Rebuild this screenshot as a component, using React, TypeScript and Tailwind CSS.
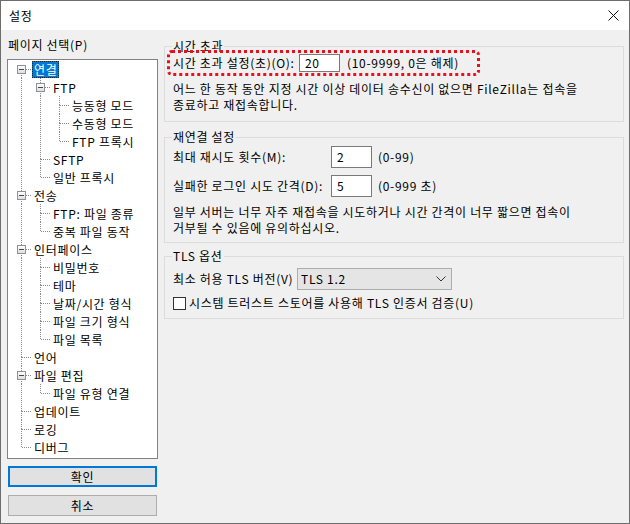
import React from "react";

type Item = { label: string; level: number; selected?: boolean };

const items: Item[] = [
  { label: "연결", level: 0, selected: true },
  { label: "FTP", level: 1 },
  { label: "능동형 모드", level: 2 },
  { label: "수동형 모드", level: 2 },
  { label: "FTP 프록시", level: 2 },
  { label: "SFTP", level: 1 },
  { label: "일반 프록시", level: 1 },
  { label: "전송", level: 0 },
  { label: "FTP: 파일 종류", level: 1 },
  { label: "중복 파일 동작", level: 1 },
  { label: "인터페이스", level: 0 },
  { label: "비밀번호", level: 1 },
  { label: "테마", level: 1 },
  { label: "날짜/시간 형식", level: 1 },
  { label: "파일 크기 형식", level: 1 },
  { label: "파일 목록", level: 1 },
  { label: "언어", level: 0 },
  { label: "파일 편집", level: 0 },
  { label: "파일 유형 연결", level: 1 },
  { label: "업데이트", level: 0 },
  { label: "로깅", level: 0 },
  { label: "디버그", level: 0 },
];

const hasNextSibling = (i: number) => {
  const lvl = items[i].level;
  for (let j = i + 1; j < items.length; j++) {
    if (items[j].level < lvl) return false;
    if (items[j].level === lvl) return true;
  }
  return false;
};

const ancestorAt = (i: number, lvl: number) => {
  for (let j = i; j >= 0; j--) {
    if (items[j].level === lvl) return j;
  }
  return -1;
};

const LINE = "#8a8a8a";

const TreeCell: React.FC<{ mode: "pass" | "empty" | "node"; top?: boolean; bottom?: boolean; expander?: boolean }> = ({ mode, top, bottom, expander }) => {
  return (
    <svg width={19} height={18} className="shrink-0 block">
      {mode === "pass" && <line x1={9.5} y1={0} x2={9.5} y2={18} stroke={LINE} strokeDasharray="1 1" />}
      {mode === "node" && (
        <>
          {top && <line x1={9.5} y1={0} x2={9.5} y2={9} stroke={LINE} strokeDasharray="1 1" />}
          {bottom && <line x1={9.5} y1={9} x2={9.5} y2={18} stroke={LINE} strokeDasharray="1 1" />}
          <line x1={expander ? 14 : 10} y1={9.5} x2={19} y2={9.5} stroke={LINE} strokeDasharray="1 1" />
          {expander && (
            <>
              <defs>
                <linearGradient id="exp" x1="0" y1="0" x2="0" y2="1">
                  <stop offset="0" stopColor="#ffffff" />
                  <stop offset="1" stopColor="#dcdcdc" />
                </linearGradient>
              </defs>
              <rect x={5.5} y={5.5} width={8} height={8} fill="url(#exp)" stroke="#919191" />
              <line x1={7} y1={9.5} x2={12} y2={9.5} stroke="#3b4a5c" />
            </>
          )}
        </>
      )}
    </svg>
  );
};

const TreeRow: React.FC<{ index: number }> = ({ index }) => {
  const item = items[index];
  const cells = [];
  for (let k = 0; k < item.level; k++) {
    const anc = ancestorAt(index, k);
    cells.push(<TreeCell key={k} mode={hasNextSibling(anc) ? "pass" : "empty"} />);
  }
  const expander = index + 1 < items.length && items[index + 1].level > item.level;
  cells.push(
    <TreeCell key="n" mode="node" top={!(index === 0)} bottom={hasNextSibling(index)} expander={expander} />
  );
  return (
    <div className="flex h-[18px]">
      {cells}
      <span
        className={
          "mt-[1px] ml-[1px] h-[17px] px-[2px] flex items-center whitespace-nowrap " +
          (item.selected ? "bg-[#0078d7] text-white outline-1 outline-dotted outline-[#222] -outline-offset-1" : "text-black")
        }
      >
        {item.label}
      </span>
    </div>
  );
};

const Group: React.FC<{ title: string; className?: string; children: React.ReactNode }> = ({ title, className, children }) => (
  <fieldset className={"border border-[#dcdcdc] pl-[8px] pr-[8px] " + (className || "")}>
    <legend className="px-[1px] -ml-[1px] leading-[16px]">{title}</legend>
    {children}
  </fieldset>
);

const Field: React.FC<{ value: string; h: string }> = ({ value, h }) => (
  <div className={"w-[41px] bg-white border border-[#7a7a7a] pl-[5px] flex items-center shrink-0 " + h}>{value}</div>
);

export default function App() {
  return (
    <div className="w-[630px] h-[524px] bg-[#f0f0f0] border border-[#6d6d6d] flex flex-col text-[12px] leading-[16px] tracking-[0.7px] text-black font-['Noto_Sans_CJK_KR','Liberation_Sans',sans-serif] overflow-hidden">
      <div className="h-[29px] bg-white flex items-center justify-between pl-[8px] pr-[10px] shrink-0">
        <span>설정</span>
        <svg width={11} height={11} viewBox="0 0 11 11">
          <path d="M0.5 0.5 L10.5 10.5 M10.5 0.5 L0.5 10.5" stroke="#111" strokeWidth={1} />
        </svg>
      </div>
      <div className="flex flex-1 pl-[6px]">
        <div className="w-[151px] pt-[7px] flex flex-col">
          <div className="h-[16px] pl-[1px]">페이지 선택(P)</div>
          <div className="mt-[6px] h-[400px] bg-white border border-[#828282] pl-[4px] overflow-hidden">
            {items.map((_, i) => (
              <TreeRow key={i} index={i} />
            ))}
          </div>
          <button className="mt-[7px] mx-[1px] h-[21px] bg-[#e1e1e1] border-2 border-[#0078d7] flex items-center justify-center">
            확인
          </button>
          <button className="mt-[8px] mx-[1px] h-[21px] bg-[#e1e1e1] border border-[#adadad] flex items-center justify-center">
            취소
          </button>
        </div>
        <div className="ml-[6px] w-[460px] pt-[8px] flex flex-col">
          <Group title="시간 초과" className="pb-[8px]">
            <div className="relative h-[18px] flex items-center">
              <span className="w-[126px] shrink-0 whitespace-nowrap">시간 초과 설정(초)(O):</span>
              <Field value="20" h="h-[18px]" />
              <span className="ml-[7px] whitespace-nowrap">(10-9999, 0은 해제)</span>
              <span className="absolute left-[-6px] top-[-4px] w-[313px] h-[26px] border-[3px] border-dotted border-[#e8101c] rounded-[5px]" />
            </div>
            <div className="mt-[9px] whitespace-nowrap">
              <div>어느 한 동작 동안 지정 시간 이상 데이터 송수신이 없으면 FileZilla는 접속을</div>
              <div>종료하고 재접속합니다.</div>
            </div>
          </Group>
          <Group title="재연결 설정" className="mt-[7px] pb-[6px]">
            <div className="mt-[1px] h-[22px] flex items-center">
              <span className="w-[158px] shrink-0 whitespace-nowrap">최대 재시도 횟수(M):</span>
              <Field value="2" h="h-[22px]" />
              <span className="ml-[6px]">(0-99)</span>
            </div>
            <div className="mt-[7px] h-[22px] flex items-center">
              <span className="w-[158px] shrink-0 whitespace-nowrap">실패한 로그인 시도 간격(D):</span>
              <Field value="5" h="h-[22px]" />
              <span className="ml-[6px]">(0-999 초)</span>
            </div>
            <div className="mt-[7px] whitespace-nowrap">
              <div>일부 서버는 너무 자주 재접속을 시도하거나 시간 간격이 너무 짧으면 접속이</div>
              <div>거부될 수 있음에 유의하십시오.</div>
            </div>
          </Group>
          <Group title="TLS 옵션" className="mt-[5px] pb-[7px]">
            <div className="mt-[4px] h-[22px] flex items-center">
              <span className="w-[124px] shrink-0 whitespace-nowrap">최소 허용 TLS 버전(V)</span>
              <div className="w-[155px] h-[22px] bg-[#e5e5e5] border border-[#adadad] pl-[3px] pr-[5px] flex items-center justify-between">
                <span>TLS 1.2</span>
                <svg width={10} height={6} viewBox="0 0 10 6">
                  <path d="M0.5 0.5 L5 5 L9.5 0.5" fill="none" stroke="#333" strokeWidth={1} />
                </svg>
              </div>
            </div>
            <div className="mt-[5px] h-[16px] flex items-center">
              <span className="w-[13px] h-[13px] bg-white border border-[#333] shrink-0" />
              <span className="ml-[3px] whitespace-nowrap">시스템 트러스트 스토어를 사용해 TLS 인증서 검증(U)</span>
            </div>
          </Group>
        </div>
      </div>
    </div>
  );
}
